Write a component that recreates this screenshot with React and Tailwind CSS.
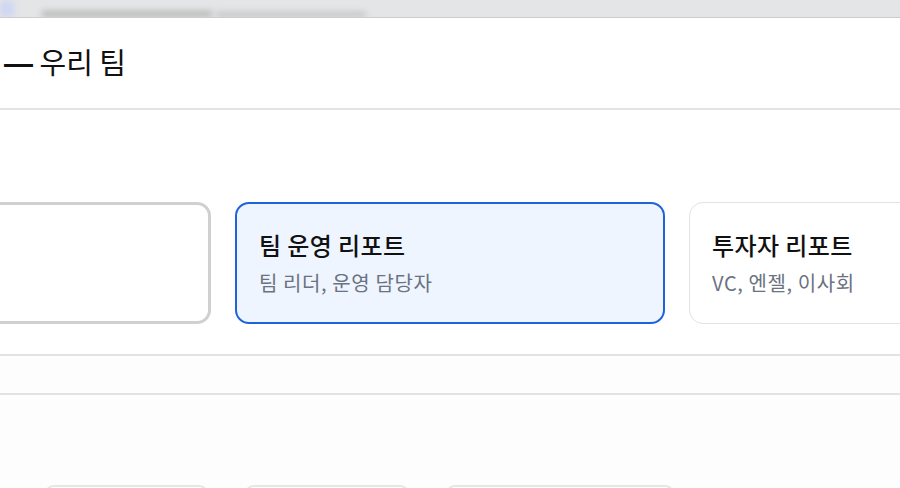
const font = "font-['Noto_Sans_CJK_KR','Noto_Sans',sans-serif]";

function ReportCard({ title, subtitle, variant }) {
  const styles = {
    hover: "border-[3px] border-[#d0d0d0] bg-white",
    selected: "border-2 border-[#1f63dc] bg-[#eef5ff]",
    idle: "border-[1.5px] border-[#e3e3e3] bg-white",
  };
  return (
    <div
      className={`shrink-0 w-[430px] h-[122px] rounded-[14px] pl-[22px] pr-6 flex flex-col justify-center gap-[10px] ${styles[variant]}`}
    >
      {title && (
        <div className="text-[24px] leading-[30px] tracking-[0.4px] font-medium text-[#111]">
          {title}
        </div>
      )}
      {subtitle && (
        <div className="text-[20px] leading-[26px] tracking-[0.6px] text-[#6b7280]">{subtitle}</div>
      )}
    </div>
  );
}

export default function App() {
  // first card is scrolled out of view, only its right edge shows
  const cards = [
    { id: "solo", variant: "hover" },
    { id: "team", title: "팀 운영 리포트", subtitle: "팀 리더, 운영 담당자", variant: "selected" },
    { id: "investor", title: "투자자 리포트", subtitle: "VC, 엔젤, 이사회", variant: "idle" },
  ];
  const chips = ["w-[165px]", "w-[166px]", "w-[230px]"];

  return (
    <div className={`w-[900px] h-[488px] overflow-hidden bg-white flex flex-col ${font}`}>
      {/* browser strip */}
      <div className="h-[18px] shrink-0 bg-[#e4e5e7] border-b border-[#cdcdcd] flex items-end overflow-hidden">
        <div className="w-[14px] h-[16px] bg-[#cfd6f2] blur-[3px]" />
        <div className="ml-[28px] w-[170px] h-[6px] bg-[#b5b5b5] blur-[3px]" />
        <div className="ml-[4px] w-[150px] h-[5px] bg-[#c2c2c2] blur-[3px]" />
      </div>

      {/* header */}
      <div className="h-[92px] shrink-0 flex items-center pl-[4px] border-b-2 border-[#e3e3e3]">
        <h1 className="text-[29px] leading-[36px] font-normal text-[#111] mt-[-2px]">
          <span className="font-['Liberation_Sans',sans-serif] font-bold">—</span> 우리 팀
        </h1>
      </div>

      {/* report type cards */}
      <div className="shrink-0 pt-[92px] pb-[30px] border-b-2 border-[#e3e3e3] overflow-hidden">
        <div className="flex gap-6 ml-[-219px]">
          {cards.map((c) => (
            <ReportCard key={c.id} {...c} />
          ))}
        </div>
      </div>

      <div className="h-[39px] shrink-0 bg-[#fdfdfd] border-b-2 border-[#e3e3e3]" />

      {/* next section */}
      <div className="flex-1 shrink-0 bg-[#fdfdfd] pt-[90px] flex gap-[35px] pl-[44px]">
        {chips.map((w, i) => (
          <div
            key={i}
            className={`${w} h-[40px] shrink-0 rounded-[10px] border-2 border-[#e6e6e6] bg-white`}
          />
        ))}
      </div>
    </div>
  );
}
